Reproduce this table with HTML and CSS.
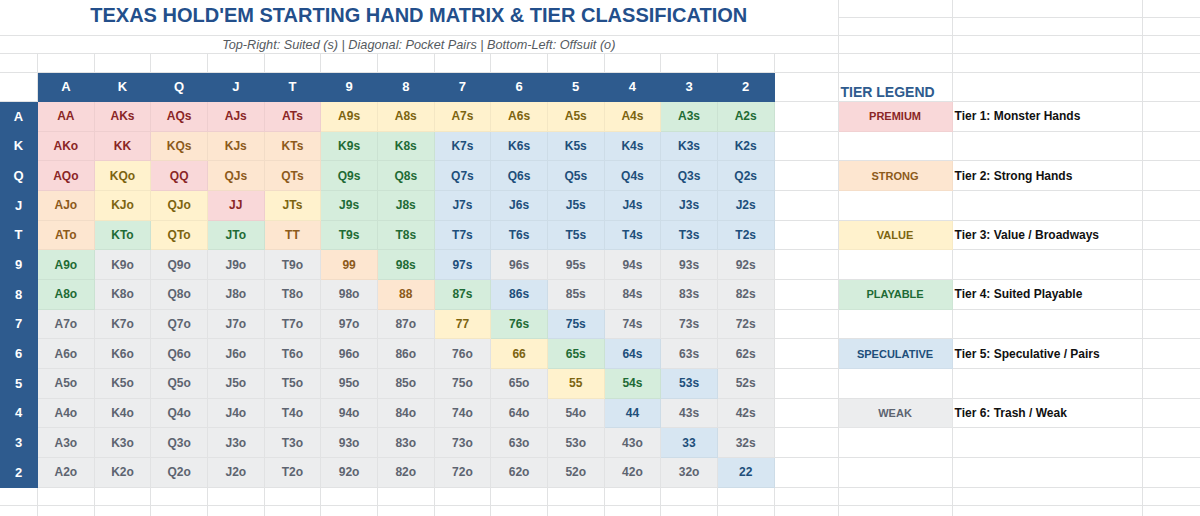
FILE: index.html
```html
<!DOCTYPE html>
<html lang="en">
<head>
<meta charset="utf-8">
<title>Texas Hold'em Starting Hand Matrix</title>
<link rel="stylesheet" href="styles.css">
</head>
<body>
<div class="sheet">
  <!-- rows 1-2: title -->
  <div class="title">TEXAS HOLD'EM STARTING HAND MATRIX &amp; TIER CLASSIFICATION</div>
  <div class="e"></div><div class="e"></div><div class="e"></div>
  <div class="e"></div><div class="e"></div><div class="e"></div>
  <!-- row 3: subtitle -->
  <div class="subtitle">Top-Right: Suited (s) | Diagonal: Pocket Pairs | Bottom-Left: Offsuit (o)</div>
  <div class="e"></div><div class="e"></div><div class="e"></div>
  <!-- row 4: empty -->
  <div class="e"></div><div class="e"></div><div class="e"></div><div class="e"></div><div class="e"></div><div class="e"></div>
  <div class="e"></div><div class="e"></div><div class="e"></div><div class="e"></div><div class="e"></div><div class="e"></div>
  <div class="e"></div><div class="e"></div><div class="e"></div><div class="e"></div><div class="e"></div><div class="e"></div>
  <!-- row 5: header -->
  <div class="e"></div>
  <div class="hd">A</div><div class="hd">K</div><div class="hd">Q</div><div class="hd">J</div><div class="hd">T</div><div class="hd">9</div><div class="hd">8</div><div class="hd">7</div><div class="hd">6</div><div class="hd">5</div><div class="hd">4</div><div class="hd">3</div><div class="hd">2</div>
  <div class="e"></div><div class="legend-title">TIER LEGEND</div><div class="e"></div><div class="e"></div>

  <!-- A -->
  <div class="rh">A</div>
  <div class="m t1">AA</div><div class="m t1">AKs</div><div class="m t1">AQs</div><div class="m t1">AJs</div><div class="m t1">ATs</div><div class="m t3">A9s</div><div class="m t3">A8s</div><div class="m t3">A7s</div><div class="m t3">A6s</div><div class="m t3">A5s</div><div class="m t3">A4s</div><div class="m t4">A3s</div><div class="m t4">A2s</div>
  <div class="e"></div><div class="lg t1">PREMIUM</div><div class="desc">Tier 1: Monster Hands</div><div class="e"></div>
  <!-- K -->
  <div class="rh">K</div>
  <div class="m t1">AKo</div><div class="m t1">KK</div><div class="m t2">KQs</div><div class="m t2">KJs</div><div class="m t2">KTs</div><div class="m t4">K9s</div><div class="m t4">K8s</div><div class="m t5">K7s</div><div class="m t5">K6s</div><div class="m t5">K5s</div><div class="m t5">K4s</div><div class="m t5">K3s</div><div class="m t5">K2s</div>
  <div class="e"></div><div class="e"></div><div class="e"></div><div class="e"></div>
  <!-- Q -->
  <div class="rh">Q</div>
  <div class="m t1">AQo</div><div class="m t3">KQo</div><div class="m t1">QQ</div><div class="m t2">QJs</div><div class="m t2">QTs</div><div class="m t4">Q9s</div><div class="m t4">Q8s</div><div class="m t5">Q7s</div><div class="m t5">Q6s</div><div class="m t5">Q5s</div><div class="m t5">Q4s</div><div class="m t5">Q3s</div><div class="m t5">Q2s</div>
  <div class="e"></div><div class="lg t2">STRONG</div><div class="desc">Tier 2: Strong Hands</div><div class="e"></div>
  <!-- J -->
  <div class="rh">J</div>
  <div class="m t2">AJo</div><div class="m t3">KJo</div><div class="m t3">QJo</div><div class="m t1">JJ</div><div class="m t3">JTs</div><div class="m t4">J9s</div><div class="m t4">J8s</div><div class="m t5">J7s</div><div class="m t5">J6s</div><div class="m t5">J5s</div><div class="m t5">J4s</div><div class="m t5">J3s</div><div class="m t5">J2s</div>
  <div class="e"></div><div class="e"></div><div class="e"></div><div class="e"></div>
  <!-- T -->
  <div class="rh">T</div>
  <div class="m t2">ATo</div><div class="m t4">KTo</div><div class="m t3">QTo</div><div class="m t4">JTo</div><div class="m t2">TT</div><div class="m t4">T9s</div><div class="m t4">T8s</div><div class="m t5">T7s</div><div class="m t5">T6s</div><div class="m t5">T5s</div><div class="m t5">T4s</div><div class="m t5">T3s</div><div class="m t5">T2s</div>
  <div class="e"></div><div class="lg t3">VALUE</div><div class="desc">Tier 3: Value / Broadways</div><div class="e"></div>
  <!-- 9 -->
  <div class="rh">9</div>
  <div class="m t4">A9o</div><div class="m t6">K9o</div><div class="m t6">Q9o</div><div class="m t6">J9o</div><div class="m t6">T9o</div><div class="m t2">99</div><div class="m t4">98s</div><div class="m t5">97s</div><div class="m t6">96s</div><div class="m t6">95s</div><div class="m t6">94s</div><div class="m t6">93s</div><div class="m t6">92s</div>
  <div class="e"></div><div class="e"></div><div class="e"></div><div class="e"></div>
  <!-- 8 -->
  <div class="rh">8</div>
  <div class="m t4">A8o</div><div class="m t6">K8o</div><div class="m t6">Q8o</div><div class="m t6">J8o</div><div class="m t6">T8o</div><div class="m t6">98o</div><div class="m t2">88</div><div class="m t4">87s</div><div class="m t5">86s</div><div class="m t6">85s</div><div class="m t6">84s</div><div class="m t6">83s</div><div class="m t6">82s</div>
  <div class="e"></div><div class="lg t4">PLAYABLE</div><div class="desc">Tier 4: Suited Playable</div><div class="e"></div>
  <!-- 7 -->
  <div class="rh">7</div>
  <div class="m t6">A7o</div><div class="m t6">K7o</div><div class="m t6">Q7o</div><div class="m t6">J7o</div><div class="m t6">T7o</div><div class="m t6">97o</div><div class="m t6">87o</div><div class="m t3">77</div><div class="m t4">76s</div><div class="m t5">75s</div><div class="m t6">74s</div><div class="m t6">73s</div><div class="m t6">72s</div>
  <div class="e"></div><div class="e"></div><div class="e"></div><div class="e"></div>
  <!-- 6 -->
  <div class="rh">6</div>
  <div class="m t6">A6o</div><div class="m t6">K6o</div><div class="m t6">Q6o</div><div class="m t6">J6o</div><div class="m t6">T6o</div><div class="m t6">96o</div><div class="m t6">86o</div><div class="m t6">76o</div><div class="m t3">66</div><div class="m t4">65s</div><div class="m t5">64s</div><div class="m t6">63s</div><div class="m t6">62s</div>
  <div class="e"></div><div class="lg t5">SPECULATIVE</div><div class="desc">Tier 5: Speculative / Pairs</div><div class="e"></div>
  <!-- 5 -->
  <div class="rh">5</div>
  <div class="m t6">A5o</div><div class="m t6">K5o</div><div class="m t6">Q5o</div><div class="m t6">J5o</div><div class="m t6">T5o</div><div class="m t6">95o</div><div class="m t6">85o</div><div class="m t6">75o</div><div class="m t6">65o</div><div class="m t3">55</div><div class="m t4">54s</div><div class="m t5">53s</div><div class="m t6">52s</div>
  <div class="e"></div><div class="e"></div><div class="e"></div><div class="e"></div>
  <!-- 4 -->
  <div class="rh">4</div>
  <div class="m t6">A4o</div><div class="m t6">K4o</div><div class="m t6">Q4o</div><div class="m t6">J4o</div><div class="m t6">T4o</div><div class="m t6">94o</div><div class="m t6">84o</div><div class="m t6">74o</div><div class="m t6">64o</div><div class="m t6">54o</div><div class="m t5">44</div><div class="m t6">43s</div><div class="m t6">42s</div>
  <div class="e"></div><div class="lg t6">WEAK</div><div class="desc">Tier 6: Trash / Weak</div><div class="e"></div>
  <!-- 3 -->
  <div class="rh">3</div>
  <div class="m t6">A3o</div><div class="m t6">K3o</div><div class="m t6">Q3o</div><div class="m t6">J3o</div><div class="m t6">T3o</div><div class="m t6">93o</div><div class="m t6">83o</div><div class="m t6">73o</div><div class="m t6">63o</div><div class="m t6">53o</div><div class="m t6">43o</div><div class="m t5">33</div><div class="m t6">32s</div>
  <div class="e"></div><div class="e"></div><div class="e"></div><div class="e"></div>
  <!-- 2 -->
  <div class="rh">2</div>
  <div class="m t6">A2o</div><div class="m t6">K2o</div><div class="m t6">Q2o</div><div class="m t6">J2o</div><div class="m t6">T2o</div><div class="m t6">92o</div><div class="m t6">82o</div><div class="m t6">72o</div><div class="m t6">62o</div><div class="m t6">52o</div><div class="m t6">42o</div><div class="m t6">32o</div><div class="m t5">22</div>
  <div class="e"></div><div class="e"></div><div class="e"></div><div class="e"></div>

  <!-- trailing empty rows -->
  <div class="e"></div><div class="e"></div><div class="e"></div><div class="e"></div><div class="e"></div><div class="e"></div>
  <div class="e"></div><div class="e"></div><div class="e"></div><div class="e"></div><div class="e"></div><div class="e"></div>
  <div class="e"></div><div class="e"></div><div class="e"></div><div class="e"></div><div class="e"></div><div class="e"></div>
  <div class="e"></div><div class="e"></div><div class="e"></div><div class="e"></div><div class="e"></div><div class="e"></div>
  <div class="e"></div><div class="e"></div><div class="e"></div><div class="e"></div><div class="e"></div><div class="e"></div>
  <div class="e"></div><div class="e"></div><div class="e"></div><div class="e"></div><div class="e"></div><div class="e"></div>
</div>
</body>
</html>
```

FILE: styles.css
```css
* { box-sizing: border-box; }

html, body {
  margin: 0;
  padding: 0;
  background: #ffffff;
  overflow: hidden;
}

body {
  font-family: "Liberation Sans", Arial, sans-serif;
  width: 1200px;
  height: 516px;
}

.sheet {
  display: grid;
  grid-template-columns: 38px repeat(13, 56.67px) 64px 114px 190px 58px;
  grid-template-rows: 18px 18px 18.3px 18.4px 29.3px repeat(13, 29.66px) 18.5px 18.5px;
  width: 1200px;
}

.sheet > * {
  border-right: 1px solid #e1e2e3;
  border-bottom: 1px solid #e1e2e3;
  display: flex;
  align-items: center;
  justify-content: center;
  white-space: nowrap;
  overflow: hidden;
}

.title {
  grid-column: span 15;
  grid-row: span 2;
  align-items: flex-start;
  padding-top: 4px;
  font-size: 20px;
  font-weight: bold;
  color: #234f8b;
}

.subtitle {
  grid-column: span 15;
  font-size: 12.7px;
  font-style: italic;
  color: #555a60;
  padding-top: 1px;
}

.hd {
  background: #2e5b8e;
  border-color: #2e5b8e;
  color: #ffffff;
  font-size: 13px;
  font-weight: bold;
}

.rh {
  background: #2e5b8e;
  border-color: #2e5b8e;
  color: #ffffff;
  font-size: 13px;
  font-weight: bold;
}

.legend-title {
  justify-content: flex-start;
  align-items: flex-end;
  padding-left: 2px;
  padding-bottom: 1px;
  font-size: 14px;
  font-weight: bold;
  color: #2e5b8e;
}

.m {
  font-size: 12px;
  font-weight: bold;
  border-color: rgba(0, 0, 0, 0.045);
}

.lg {
  font-size: 11px;
  font-weight: bold;
  border-color: rgba(0, 0, 0, 0.03);
}

.desc {
  justify-content: flex-start;
  padding-left: 2px;
  font-size: 12px;
  font-weight: bold;
  color: #111111;
}

.t1 { background: #f9d8d9; color: #8a2626; }
.t2 { background: #fde6d0; color: #8c5a1b; }
.t3 { background: #fff2cd; color: #7c6410; }
.t4 { background: #d5eddc; color: #1e6b35; }
.t5 { background: #d7e6f2; color: #204e7a; }
.t6 { background: #ecedee; color: #5d6470; }
```
